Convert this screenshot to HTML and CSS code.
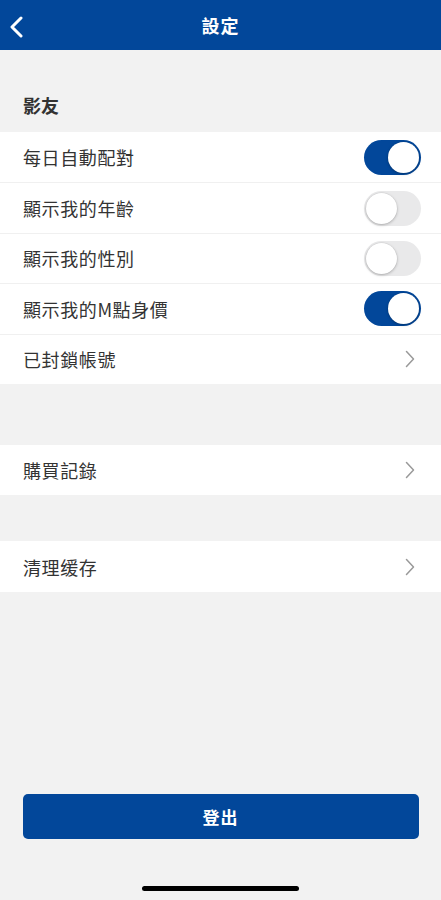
FILE: index.html
```html
<!DOCTYPE html>
<html lang="zh-Hant">
<head>
<meta charset="utf-8">
<link rel="stylesheet" href="styles.css">
</head>
<body>
<div class="app">
  <header class="nav">
    <span class="back">
      <svg width="16" height="22" viewBox="0 0 16 22"><path d="M12 2 L3 11 L12 20" fill="none" stroke="#fff" stroke-width="3" stroke-linecap="round" stroke-linejoin="round"/></svg>
    </span>
    <h1 class="title">設定</h1>
  </header>

  <div class="section-label">影友</div>
  <div class="group">
    <div class="row"><span class="label">每日自動配對</span><span class="toggle on"><span class="knob"></span></span></div>
    <div class="row"><span class="label">顯示我的年齡</span><span class="toggle"><span class="knob"></span></span></div>
    <div class="row"><span class="label">顯示我的性別</span><span class="toggle"><span class="knob"></span></span></div>
    <div class="row"><span class="label">顯示我的M點身價</span><span class="toggle on"><span class="knob"></span></span></div>
    <div class="row"><span class="label">已封鎖帳號</span><span class="chev"><svg width="10" height="18" viewBox="0 0 10 18"><path d="M1.5 1.5 L8.5 9 L1.5 16.5" fill="none" stroke="#999" stroke-width="1.5" stroke-linecap="round" stroke-linejoin="round"/></svg></span></div>
  </div>

  <div class="group gap1">
    <div class="row"><span class="label">購買記錄</span><span class="chev"><svg width="10" height="18" viewBox="0 0 10 18"><path d="M1.5 1.5 L8.5 9 L1.5 16.5" fill="none" stroke="#999" stroke-width="1.5" stroke-linecap="round" stroke-linejoin="round"/></svg></span></div>
  </div>

  <div class="group gap2">
    <div class="row"><span class="label">清理缓存</span><span class="chev"><svg width="10" height="18" viewBox="0 0 10 18"><path d="M1.5 1.5 L8.5 9 L1.5 16.5" fill="none" stroke="#999" stroke-width="1.5" stroke-linecap="round" stroke-linejoin="round"/></svg></span></div>
  </div>

  <div class="spacer"></div>

  <div class="footer">
    <button class="logout">登出</button>
    <div class="home"></div>
  </div>
</div>
</body>
</html>
```
FILE: styles.css
```css
* { box-sizing: border-box; }
html, body { margin: 0; padding: 0; }
body {
  background: #f2f2f2;
  font-family: "Noto Sans CJK TC", "Noto Sans CJK SC", "Noto Sans", sans-serif;
  color: #222;
}
.app {
  width: 441px;
  height: 900px;
  display: flex;
  flex-direction: column;
  overflow: hidden;
}
.nav {
  height: 50px;
  background: #02479a;
  display: flex;
  align-items: center;
  justify-content: center;
  position: relative;
  flex: none;
}
.back {
  position: absolute;
  left: 9px;
  top: 16px;
  display: flex;
}
.title {
  margin: 0;
  color: #fff;
  font-size: 18px;
  font-weight: 700;
  letter-spacing: 1px;
}
.section-label {
  padding: 40px 23px 0;
  height: 82px;
  font-size: 18px;
  font-weight: 700;
  color: #333;
  line-height: 30px;
  flex: none;
}
.group {
  background: #fff;
  flex: none;
}
.gap1 { margin-top: 61px; }
.gap2 { margin-top: 46px; }
.row {
  height: 50.4px;
  display: flex;
  align-items: center;
  justify-content: space-between;
  padding: 0 20px 0 23px;
  border-top: 1px solid #f0f0f0;
}
.row:first-child { border-top: none; }
.label {
  font-size: 18px;
  color: #333;
  letter-spacing: 0.6px;
}
.toggle {
  width: 57px;
  height: 35px;
  border-radius: 18px;
  background: #e9e9ea;
  position: relative;
}
.toggle .knob {
  position: absolute;
  top: 2px;
  left: 2px;
  width: 31px;
  height: 31px;
  border-radius: 50%;
  background: #fff;
  box-shadow: 0 1px 3px rgba(0,0,0,0.25), 0 0 0 0.5px rgba(0,0,0,0.06);
}
.toggle.on { background: #02479a; }
.toggle.on .knob { left: 24px; }
.chev {
  display: flex;
  margin-right: 6px;
}
.spacer { flex: 1; }
.footer {
  flex: none;
  display: flex;
  flex-direction: column;
  align-items: center;
  padding-bottom: 9px;
}
.logout {
  width: 396px;
  height: 45px;
  border: none;
  border-radius: 5px;
  background: #02479a;
  color: #fff;
  font-family: inherit;
  font-size: 17px;
  font-weight: 700;
  letter-spacing: 1px;
}
.home {
  margin-top: 47px;
  width: 157px;
  height: 5px;
  border-radius: 3px;
  background: #000;
}
```
